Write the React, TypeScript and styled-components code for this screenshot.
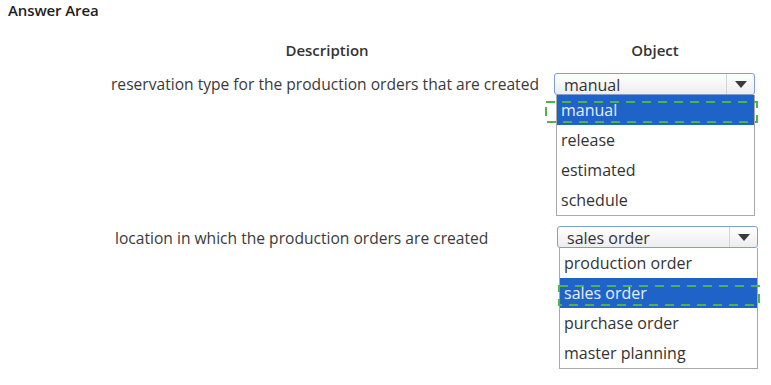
import React from "react";
import styled, { createGlobalStyle } from "styled-components";

const GlobalStyle = createGlobalStyle`
  html, body {
    margin: 0;
    padding: 0;
    background: #ffffff;
  }
  body {
    font-family: "Open Sans", "Noto Sans", sans-serif;
    color: #333333;
  }
`;

const Page = styled.div`
  width: 771px;
  height: 385px;
  overflow: hidden;
  background: #ffffff;
`;

const Title = styled.div`
  padding: 0 0 0 8px;
  height: 20px;
  line-height: 20px;
  font-size: 15px;
  font-weight: 600;
  color: #1f1f1f;
  letter-spacing: -0.1px;
`;

const Grid = styled.div`
  display: grid;
  grid-template-columns: 454px 202px;
  margin-left: 100px;
  margin-top: 20px;
`;

const HeadCell = styled.div`
  text-align: center;
  font-size: 15px;
  font-weight: 600;
  color: #333333;
  height: 20px;
  line-height: 20px;
`;

const DescCell = styled.div<{ $indent: number; $top: number }>`
  padding-left: ${(p) => p.$indent}px;
  padding-top: ${(p) => p.$top}px;
  font-size: 15.6px;
  line-height: 22px;
  color: #3a3a3a;
  white-space: nowrap;
`;

const ObjectCell = styled.div<{ $shift: number; $top: number }>`
  padding-left: ${(p) => p.$shift}px;
  padding-top: ${(p) => p.$top}px;
`;

const Dropdown = styled.div`
  position: relative;
  width: 201px;
`;

const SelectBox = styled.div`
  display: flex;
  height: 22px;
  border: 1px solid #7f9ed3;
  border-radius: 3px;
  background: linear-gradient(#ffffff, #ededed);
  box-sizing: border-box;
`;

const SelectValue = styled.div`
  flex: 1;
  padding-left: 9px;
  font-size: 16px;
  line-height: 22px;
  height: 20px;
  color: #333333;
  white-space: nowrap;
`;

const ArrowButton = styled.div`
  width: 27px;
  border-left: 1px solid #d4d4d4;
  display: flex;
  align-items: center;
  justify-content: center;
`;

const Arrow = styled.div`
  width: 0;
  height: 0;
  border-left: 6px solid transparent;
  border-right: 6px solid transparent;
  border-top: 7px solid #3a3a3a;
`;

const List = styled.div`
  margin-left: 2px;
  width: 199px;
  border: 1px solid #a9a9a9;
  border-top: none;
  box-sizing: border-box;
  background: #ffffff;
  position: relative;
`;

const Item = styled.div<{ $selected?: boolean }>`
  height: 30px;
  line-height: 30px;
  padding-left: 4px;
  font-size: 16px;
  color: ${(p) => (p.$selected ? "#e6efff" : "#333333")};
  background: ${(p) => (p.$selected ? "#1f63c9" : "transparent")};
`;

const Marker = styled.svg`
  position: absolute;
  pointer-events: none;
  overflow: visible;
`;

type DropProps = {
  value: string;
  options: string[];
  mark: { left: number; top: number; width: number; height: number };
};

function Select({ value, options, mark }: DropProps) {
  return (
    <Dropdown>
      <SelectBox>
        <SelectValue>{value}</SelectValue>
        <ArrowButton>
          <Arrow />
        </ArrowButton>
      </SelectBox>
      <List>
        {options.map((o) => (
          <Item key={o} $selected={o === value}>
            {o}
          </Item>
        ))}
        <Marker
          width={mark.width}
          height={mark.height}
          style={{ left: mark.left, top: mark.top }}
        >
          <rect
            x={1}
            y={1}
            width={mark.width - 2}
            height={mark.height - 2}
            fill="none"
            stroke="#4fb34a"
            strokeWidth={2}
            strokeDasharray="9 7"
          />
        </Marker>
      </List>
    </Dropdown>
  );
}

export default function App() {
  return (
    <Page>
      <GlobalStyle />
      <Title>Answer Area</Title>
      <Grid>
        <HeadCell>Description</HeadCell>
        <HeadCell>Object</HeadCell>

        <DescCell $indent={11} $top={13}>
          reservation type for the production orders that are created
        </DescCell>
        <ObjectCell $shift={0} $top={13}>
          <Select
            value="manual"
            options={["manual", "release", "estimated", "schedule"]}
            mark={{ left: -12, top: 6, width: 213, height: 22 }}
          />
        </ObjectCell>

        <DescCell $indent={15} $top={11}>
          location in which the production orders are created
        </DescCell>
        <ObjectCell $shift={3} $top={10}>
          <Select
            value="sales order"
            options={["production order", "sales order", "purchase order", "master planning"]}
            mark={{ left: -2, top: 37, width: 202, height: 21 }}
          />
        </ObjectCell>
      </Grid>
    </Page>
  );
}
